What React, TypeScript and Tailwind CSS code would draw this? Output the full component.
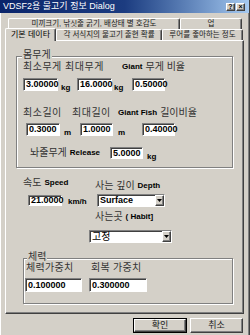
const raised =
  "bg-[#d4d0c8] border border-t-white border-l-white border-r-[#404040] border-b-[#404040] shadow-[inset_-1px_-1px_0_#808080]";
const sunken =
  "bg-white border border-t-[#808080] border-l-[#808080] border-r-white border-b-white shadow-[inset_1px_1px_0_#404040]";
const etched =
  "border border-[#808080] shadow-[1px_1px_0_#ffffff,inset_1px_1px_0_#ffffff]";

function Field({ className, value }: { className: string; value: string }) {
  return (
    <div className={`${sunken} ${className} flex items-center pl-[2px] text-[9px] font-bold leading-none text-black`}>
      {value}
    </div>
  );
}

function Select({ className, value, big }: { className: string; value: string; big?: boolean }) {
  return (
    <div className={`${sunken} ${className} flex items-stretch`}>
      <div className={`flex-1 flex items-center pl-[2px] leading-none text-black ${big ? "text-[10px]" : "text-[9px] font-bold"}`}>
        {value}
      </div>
      <div className={`${raised} w-[9px] flex items-center justify-center`}>
        <svg width="5" height="3" viewBox="0 0 5 3">
          <path d="M0 0h5L2.5 3z" fill="#000" />
        </svg>
      </div>
    </div>
  );
}

function Tab({ className, label, active }: { className: string; label: string; active?: boolean }) {
  return (
    <div
      className={`${className} flex items-center justify-center bg-[#d4d0c8] border-t border-l border-white border-r border-r-[#404040] rounded-t-[2px] shadow-[inset_-1px_0_0_#808080] leading-none text-[#222] whitespace-nowrap overflow-hidden ${active ? "text-[8px]" : "text-[7.5px]"}`}
    >
      <span className={active ? "text-black" : ""}>{label}</span>
    </div>
  );
}

export default function App() {
  return (
    <div className="w-[250px] h-[335px] overflow-hidden bg-[#d4d0c8] border-r border-r-[#404040] shadow-[inset_-1px_0_0_#808080,inset_1px_0_0_#ffffff] font-['Liberation_Sans','Noto_Sans_CJK_KR',sans-serif]">
      {/* title bar */}
      <div className="h-[13px] flex items-center justify-between bg-linear-to-r from-[#0a246a] via-[#1c3c80] to-[#a6caf0]">
        <span className="ml-[3px] text-[9px] leading-none text-white">VDSF2용 물고기 정보 Dialog</span>
        <div className="flex gap-[1px] mr-[4px]">
          <div className={`${raised} w-[9px] h-[8px] flex items-center justify-center text-[7px] font-bold leading-none text-black`}>?</div>
          <div className={`${raised} w-[9px] h-[8px] flex items-center justify-center text-[7px] font-bold leading-none text-black`}>×</div>
        </div>
      </div>

      {/* tabs */}
      <div className="pt-[5px]">
        <div className="flex ml-[8px] h-[11px]">
          <Tab className="w-[172px]" label="미끼크기, 낚싯줄 굵기, 배상태 별 호감도" />
          <Tab className="w-[62px]" label="업" />
        </div>
        <div className="flex ml-[5px] h-[11px] items-end">
          <Tab className="w-[51px] h-[13px] -mb-[1px] relative z-10" label="기본 데이타" active />
          <Tab className="w-[106px] h-[11px]" label="각 서식지의 물고기 출현 확률" />
          <Tab className="w-[81px] h-[11px]" label="루어를 좋아하는 정도" />
        </div>
      </div>

      {/* tab page */}
      <div className="ml-[5px] w-[239px] h-[274px] border border-t-white border-l-white border-r-[#404040] border-b-[#404040] shadow-[inset_-1px_-1px_0_#808080] flex flex-col">
        {/* 몸무게 group */}
        <div className={`${etched} relative mt-[15px] ml-[10px] w-[217px] h-[112px] flex flex-col`}>
          <span className="absolute -top-[7px] left-[5px] px-[1px] bg-[#d4d0c8] text-[10px] leading-none text-[#333]">몸무게</span>
          <div className="mt-[4px] h-[11px] flex items-center text-[10px] leading-none text-[#333]">
            <span className="ml-[6px] w-[99px] tracking-[0.5px]">최소무게 최대무게</span>
            <span className="flex items-center gap-[3px]">
              <b className="text-[8px] text-black">Giant</b>무게 비율
            </span>
          </div>
          <div className="mt-[6px] h-[13px] flex items-stretch text-[8px] font-bold text-black">
            <Field className="ml-[6px] w-[35px]" value="3.00000" />
            <span className="w-[19px] pl-[3px] self-end leading-none -mb-[1px]">kg</span>
            <Field className="w-[35px]" value="16.0000" />
            <span className="w-[20px] pl-[2px] self-end leading-none -mb-[1px]">kg</span>
            <Field className="w-[33px]" value="0.50000" />
          </div>
          <div className="mt-[16px] h-[11px] flex items-center text-[10px] leading-none text-[#333]">
            <span className="ml-[6px] w-[49px] tracking-[0.5px]">최소길이</span>
            <span className="w-[46px] tracking-[0.5px]">최대길이</span>
            <span className="flex items-center gap-[3px]">
              <b className="text-[8px] text-black">Giant Fish</b>길이비율
            </span>
          </div>
          <div className="mt-[5px] h-[13px] flex items-stretch text-[8px] font-bold text-black">
            <Field className="ml-[9px] w-[34px]" value="0.3000" />
            <span className="w-[20px] pl-[4px] self-end leading-none -mb-[1px]">m</span>
            <Field className="w-[33px]" value="1.0000" />
            <span className="w-[29px] pl-[5px] self-end leading-none -mb-[1px]">m</span>
            <Field className="w-[33px]" value="0.40000" />
          </div>
          <div className="mt-[11px] h-[12px] flex items-stretch">
            <span className="ml-[13px] w-[80px] flex items-center gap-[3px] text-[10px] leading-none text-[#333]">
              놔줄무게<b className="text-[8px] text-black">Release</b>
            </span>
            <Field className="w-[33px]" value="5.0000" />
            <span className="pl-[4px] self-end leading-none -mb-[2px] text-[8px] font-bold text-black">kg</span>
          </div>
        </div>

        {/* speed / depth */}
        <div className="mt-[9px] h-[14px] flex items-start text-[10px] leading-none text-[#333]">
          <span className="ml-[17px] w-[72px] flex items-center gap-[3px] mt-[1px]">
            속도<b className="text-[8px] text-black">Speed</b>
          </span>
          <span className="flex items-center gap-[3px] mt-[4px]">
            사는 깊이<b className="text-[8px] text-black">Depth</b>
          </span>
        </div>
        <div className="mt-[3px] h-[13px] flex items-stretch">
          <Field className="ml-[22px] w-[34px] mt-[1px] h-[11px]" value="21.0000" />
          <span className="w-[35px] pl-[6px] self-end leading-none text-[8px] font-bold text-black mb-[1px]">km/h</span>
          <Select className="w-[68px]" value="Surface" />
        </div>
        <div className="mt-[5px] h-[10px] flex items-center text-[10px] leading-none text-[#333]">
          <span className="ml-[89px] flex items-center gap-[3px]">
            사는곳<b className="text-[8px] text-black">( Habit]</b>
          </span>
        </div>
        <div className="mt-[8px] h-[13px] flex">
          <Select className="ml-[83px] w-[83px]" value="고정" big />
        </div>

        {/* 체력 group */}
        <div className={`${etched} relative mt-[15px] ml-[17px] w-[210px] h-[46px] flex flex-col`}>
          <span className="absolute -top-[7px] left-[3px] px-[1px] bg-[#d4d0c8] text-[10px] leading-none text-[#333]">체력</span>
          <div className="mt-[4px] h-[10px] flex items-center text-[10px] leading-none text-[#333]">
            <span className="ml-[2px] w-[65px] tracking-[0.3px]">체력가중치</span>
            <span className="tracking-[0.3px]">회복 가중치</span>
          </div>
          <div className="mt-[5px] h-[14px] flex">
            <Field className="ml-[1px] w-[57px]" value="0.100000" />
            <Field className="ml-[7px] w-[58px]" value="0.300000" />
          </div>
        </div>
      </div>

      {/* buttons */}
      <div className="mt-[4px] flex gap-[3px] ml-[133px]">
        <div className="w-[54px] h-[15px] flex items-center justify-center border border-black">
          <div className={`${raised} w-full h-full flex items-center justify-center text-[9px] leading-none text-[#222]`}>확인</div>
        </div>
        <div className={`${raised} w-[53px] h-[15px] flex items-center justify-center text-[9px] leading-none text-[#222]`}>취소</div>
      </div>
    </div>
  );
}
